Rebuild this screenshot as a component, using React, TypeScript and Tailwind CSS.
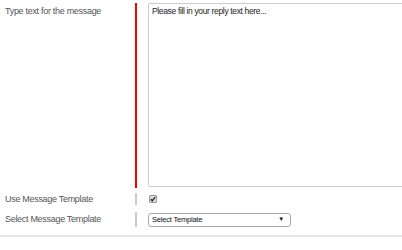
export default function App() {
    return (
        <div className="w-[402px] h-[250px] bg-white overflow-hidden font-['Liberation_Sans',Arial,sans-serif] text-[#555]">
            <div className="flex">
                <div className="w-[135px] shrink-0 pl-[5px] pt-[5px] text-[9px] tracking-[-0.3px] leading-[12px]">Type text for the message</div>
                <div className="w-[2px] shrink-0 h-[185px] mt-[3px] bg-[#ff0000]" />
                <div className="pl-[11px] pt-[3px] shrink-0">
                    <div className="w-[270px] h-[184px] border border-[#cccccc] rounded-[2px] px-[3px] py-[2px] text-[8.5px] tracking-[-0.35px] leading-[11px] text-[#222]">
                        Please fill in your reply text here...
                    </div>
                </div>
            </div>
            <div className="flex items-center mt-[5px] h-[12px]">
                <div className="w-[135px] shrink-0 pl-[5px] text-[9px] tracking-[-0.3px] leading-[12px]">Use Message Template</div>
                <div className="w-[2px] shrink-0 h-[12px] bg-[#cccccc]" />
                <div className="pl-[12px]">
                    <div className="w-[8px] h-[8px] border border-[#999] rounded-[1px] bg-[#dddddd] flex items-center justify-center">
                        <svg width="6" height="6" viewBox="0 0 6 6">
                            <path d="M0.8 3.2 L2.3 4.7 L5.2 1.2" stroke="#222" strokeWidth="1.3" fill="none" />
                        </svg>
                    </div>
                </div>
            </div>
            <div className="flex items-center mt-[7px] h-[15px]">
                <div className="w-[135px] shrink-0 pl-[5px] pb-[2px] text-[9px] tracking-[-0.3px] leading-[12px]">Select Message Template</div>
                <div className="w-[2px] shrink-0 h-[15px] bg-[#cccccc]" />
                <div className="pl-[11px]">
                    <div className="w-[143px] h-[14px] border border-[#aaaaaa] rounded-[3px] flex items-center justify-between pl-[3px] pr-[6px] text-[7.5px] tracking-[-0.2px] text-[#111]">
                        <span>Select Template</span>
                        <span className="text-[6px]">▼</span>
                    </div>
                </div>
            </div>
            <div className="mt-[8px] h-[2px] bg-[#e5e5e5]" />
        </div>
    )
}
